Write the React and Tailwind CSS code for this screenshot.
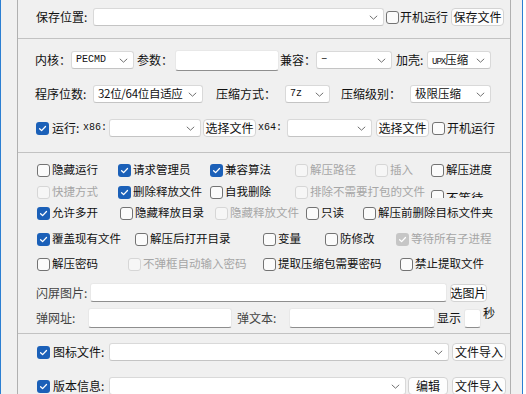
import React from "react";

// ---------- small controls ----------
const Chevron = () => (
  <svg width="9" height="5" viewBox="0 0 9 5" className="shrink-0">
    <path d="M0.8 0.8 L4.5 4.2 L8.2 0.8" stroke="#707070" strokeWidth="1" fill="none" />
  </svg>
);

const Box = ({ checked, disabled, className = "" }) => {
  if (checked) {
    return (
      <span
        className={`w-[13px] h-[13px] rounded-[3px] flex items-center justify-center shrink-0 ${
          disabled ? "bg-[#c6c6c6]" : "bg-[#1b60b8]"
        } ${className}`}
      >
        <svg width="9" height="9" viewBox="0 0 9 9">
          <path
            d="M1.6 4.7 L3.6 6.6 L7.5 2.5"
            stroke="white"
            strokeWidth="1.3"
            fill="none"
            strokeLinecap="round"
            strokeLinejoin="round"
          />
        </svg>
      </span>
    );
  }
  return (
    <span
      className={`block w-[13px] h-[13px] rounded-[3px] border shrink-0 ${
        disabled ? "border-[#d6d6d6] bg-[#f6f6f6]" : "border-[#737373] bg-[#fbfbfb]"
      } ${className}`}
    />
  );
};

const Check = ({ label, checked, disabled, className = "" }) => (
  <div className={`flex items-center gap-[2px] shrink-0 h-[20px] ${className}`}>
    <Box checked={checked} disabled={disabled} />
    <span
      className={`text-[11.5px] whitespace-nowrap ${
        disabled ? "text-[#a6a6a6]" : "text-[#111]"
      }`}
    >
      {label}
    </span>
  </div>
);

const Combo = ({ className = "", children, mono }) => (
  <div
    className={`h-[18px] bg-white border border-[#d9d9d9] border-b-[#c4c4c4] rounded-[3px] flex items-center pl-[4px] pr-[5px] shrink-0 ${className}`}
  >
    <span
      className={`flex-1 whitespace-nowrap ${
        mono ? "font-['Liberation_Mono',monospace] text-[10px]" : "text-[11.5px]"
      }`}
    >
      {children}
    </span>
    <Chevron />
  </div>
);

const Button = ({ className = "", children }) => (
  <div
    className={`h-[18px] border border-[#d3d3d3] rounded-[4px] bg-[#fdfdfd] flex items-center justify-center text-[12px] whitespace-nowrap shrink-0 ${className}`}
  >
    {children}
  </div>
);

const TextBox = ({ className = "" }) => (
  <div
    className={`bg-white border border-[#e8e8e8] border-b-[#8e8e8e] rounded-[3px] shrink-0 ${className}`}
  />
);

const Label = ({ className = "", children }) => (
  <span className={`text-[12px] whitespace-nowrap shrink-0 ${className}`}>{children}</span>
);

// ================= APP =================
export default function App() {
  return (
    <div className="w-[526px] h-[394px] overflow-hidden flex bg-[#f0f0f0] font-['Noto_Sans_CJK_SC',sans-serif] text-[#111] leading-none">
      <div className="w-px bg-[#2b7fd2]" />
      <div className="w-[16px]" />

      {/* main panel */}
      <div className="w-[494px] border-x border-[#b0b0b0] flex flex-col">
        {/* save */}
        <div className="h-[39px] border-b border-[#c2c2c2] shrink-0">
          <div className="h-[34px] flex items-center pl-[18px]">
            <Label className="w-[57px]">保存位置:</Label>
            <Combo className="w-[291px] h-[17px]" />
            <Box className="ml-[2px]" />
            <Label className="ml-[1px]">开机运行</Label>
            <Button className="ml-[3px] w-[53px]">保存文件</Button>
          </div>
        </div>

        {/* core options */}
        <div className="h-[114px] border-b border-[#c2c2c2] shrink-0 pt-[11px] flex flex-col">
          <div className="h-[20px] flex items-center pl-[17px]">
            <Label className="w-[36px]">内核：</Label>
            <Combo className="w-[63px]" mono>PECMD</Combo>
            <Label className="ml-[3px] w-[38px]">参数：</Label>
            <TextBox className="w-[104px] h-[21px]" />
            <Label className="w-[37px] pl-[1px]">兼容：</Label>
            <Combo className="w-[76px]" mono>−</Combo>
            <Label className="ml-[4px] w-[31px]">加壳:</Label>
            <Combo className="w-[64px] pl-[3px]">
              <span className="font-['Liberation_Mono',monospace] text-[9px] tracking-[-1px]">UPX</span>
              <span className="text-[11.5px]">压缩</span>
            </Combo>
          </div>

          <div className="h-[20px] mt-[14px] flex items-center pl-[17px]">
            <Label className="w-[58px]">程序位数:</Label>
            <Combo className="w-[110px] pl-[2px]">
              <span className="tracking-[-0.3px]">32位/64位自适应</span>
            </Combo>
            <Label className="ml-[13px] w-[69px]">压缩方式：</Label>
            <Combo className="w-[45px]" mono>7z</Combo>
            <Label className="ml-[11px] w-[69px]">压缩级别：</Label>
            <Combo className="w-[81px]">极限压缩</Combo>
          </div>

          <div className="h-[20px] mt-[14px] flex items-center pl-[18px]">
            <Box checked />
            <Label className="ml-[3px] w-[31px]">运行:</Label>
            <span className="w-[26px] font-['Liberation_Mono',monospace] text-[10px]">x86:</span>
            <Combo className="w-[92px]" />
            <Button className="ml-[2px] w-[53px]">选择文件</Button>
            <span className="ml-[2px] w-[29px] font-['Liberation_Mono',monospace] text-[10px]">x64:</span>
            <Combo className="w-[85px]" />
            <Button className="ml-[4px] w-[53px]">选择文件</Button>
            <Box className="ml-[3px]" />
            <Label className="ml-[2px]">开机运行</Label>
          </div>
        </div>

        {/* flags */}
        <div className="h-[181px] border-b border-[#c2c2c2] shrink-0 pt-[7px] flex flex-col">
          <div className="flex pl-[19px]">
            <Check className="w-[81px]" label="隐藏运行" />
            <Check className="w-[92px]" label="请求管理员" checked />
            <Check className="w-[85px]" label="兼容算法" checked />
            <Check className="w-[80px]" label="解压路径" disabled />
            <Check className="w-[56px]" label="插入" disabled />
            <Check label="解压进度" />
          </div>

          <div className="flex pl-[19px] mt-[2px]">
            <Check className="w-[81px]" label="快捷方式" disabled />
            <Check className="w-[92px]" label="删除释放文件" checked />
            <Check className="w-[85px]" label="自我删除" />
            <Check className="w-[136px]" label="排除不需要打包的文件" disabled />
            <div className="h-[16px] overflow-hidden">
              <div className="mt-[8px] flex items-start gap-[2px]">
                <Box />
                <span className="text-[12.5px] mt-[2px]">不等待</span>
              </div>
            </div>
          </div>

          <div className="flex pl-[19px] mt-[1px]">
            <Check className="w-[83px]" label="允许多开" checked />
            <Check className="w-[95px]" label="隐藏释放目录" />
            <Check className="w-[91px]" label="隐藏释放文件" disabled />
            <Check className="w-[57px]" label="只读" />
            <Check label="解压前删除目标文件夹" />
          </div>

          <div className="flex pl-[19px] mt-[6px]">
            <Check className="w-[98px]" label="覆盖现有文件" checked />
            <Check className="w-[128px]" label="解压后打开目录" />
            <Check className="w-[62px]" label="变量" />
            <Check className="w-[71px]" label="防修改" />
            <Check label="等待所有子进程" checked disabled />
          </div>

          <div className="flex pl-[19px] mt-[5px]">
            <Check className="w-[91px]" label="解压密码" />
            <Check className="w-[135px]" label="不弹框自动输入密码" disabled />
            <Check className="w-[137px]" label="提取压缩包需要密码" />
            <Check label="禁止提取文件" />
          </div>

          <div className="h-[19px] mt-[9px] flex items-center pl-[18px]">
            <Label className="w-[54px] text-[#444]">闪屏图片:</Label>
            <TextBox className="w-[357px] h-[19px]" />
            <Button className="ml-[3px] w-[37px] h-[16px] text-[11.5px] rounded-[3px]">选图片</Button>
          </div>

          <div className="h-[20px] mt-[6px] flex items-center pl-[18px]">
            <Label className="w-[52px] text-[#444]">弹网址:</Label>
            <TextBox className="w-[144px] h-[20px]" />
            <Label className="ml-[5px] w-[52px] text-[#444]">弹文本:</Label>
            <TextBox className="w-[146px] h-[20px]" />
            <Label className="ml-[2px] w-[27px]">显示</Label>
            <TextBox className="w-[17px] h-[19px]" />
            <Label className="ml-[2px] self-start mt-[-1px]">秒</Label>
          </div>
        </div>

        {/* resources */}
        <div className="flex-1 pt-[9px] flex flex-col">
          <div className="h-[18px] flex items-center pl-[19px]">
            <Box checked />
            <Label className="ml-[3px] w-[56px]">图标文件:</Label>
            <Combo className="w-[340px]" />
            <Button className="ml-[3px] w-[54px]">文件导入</Button>
          </div>
          <div className="h-[18px] mt-[16px] flex items-center pl-[19px]">
            <Box checked />
            <Label className="ml-[3px] w-[56px]">版本信息:</Label>
            <Combo className="w-[297px]" />
            <Button className="ml-[2px] w-[40px]">编辑</Button>
            <Button className="ml-[4px] w-[54px]">文件导入</Button>
          </div>
        </div>
      </div>

      <div className="w-[11px]" />
      <div className="w-px bg-[#2b7fd2]" />
      <div className="flex-1 bg-white" />
    </div>
  );
}
